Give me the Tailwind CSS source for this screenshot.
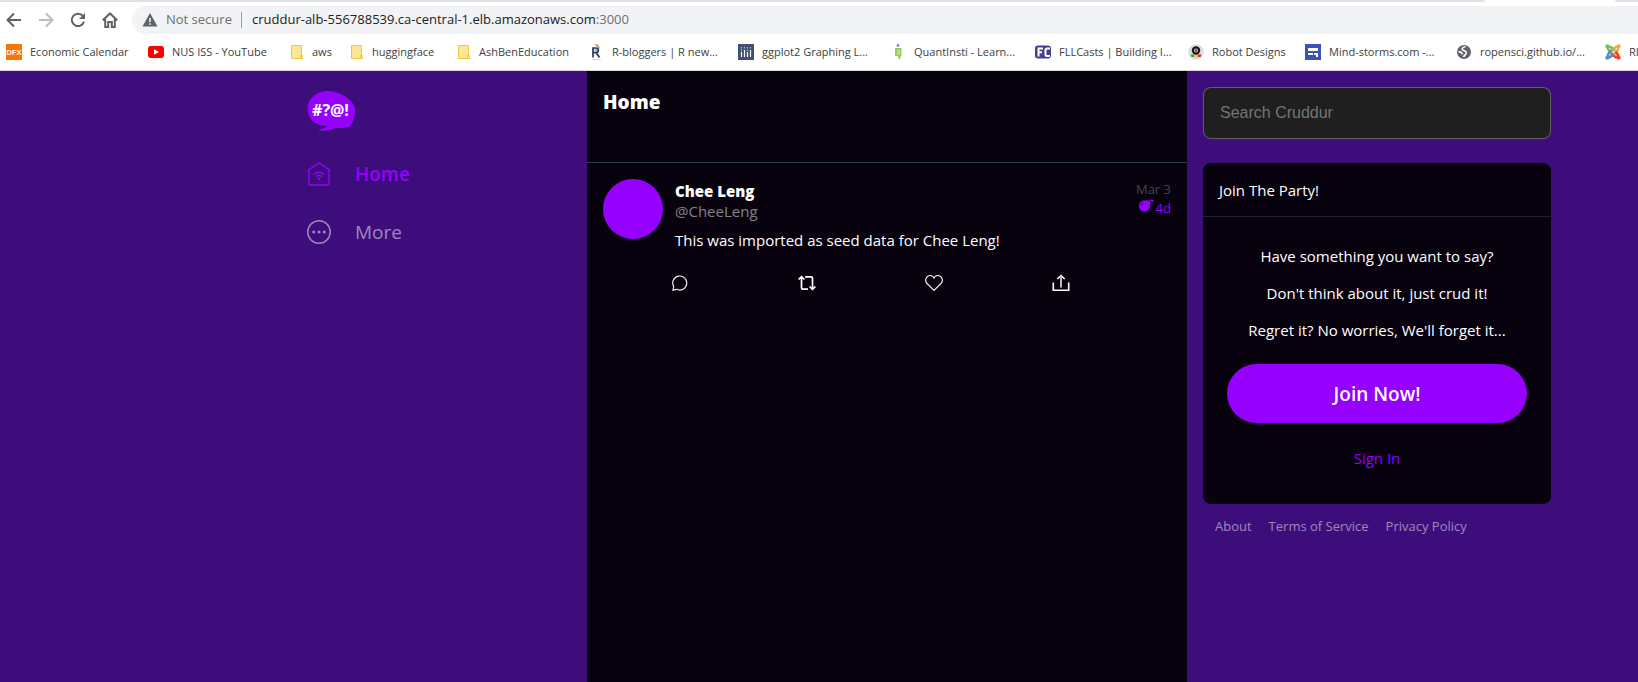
<!DOCTYPE html>
<html lang="en">
<head>
<meta charset="utf-8">
<title>Cruddur</title>
<script src="https://cdn.jsdelivr.net/npm/@tailwindcss/browser@4"></script>
</head>
<body class="flex min-h-screen flex-col overflow-x-hidden bg-[#3d0d7b] font-['Open_Sans','Noto_Sans',sans-serif] text-white">

<!-- Browser toolbar -->
<header class="overflow-hidden border-b border-[#d5dbdd] bg-white text-[#3c4043]">
  <div class="flex h-0.5"><div class="flex-1 rounded-br-lg bg-[#dee1e6]"></div><div class="w-[130px]"></div><div class="w-[23px] rounded-bl-lg bg-[#dee1e6]"></div></div>
  <div class="flex items-center pt-1 pl-1.5">
    <div class="flex shrink-0 gap-4 pr-3.5">
      <button aria-label="Back" class="size-4"><svg viewBox="0 0 16 16" class="size-4 fill-none stroke-[#5f6368] stroke-2"><path d="M15 8H2M8 1.500L1.500 8L8 14.500"/></svg></button>
      <button aria-label="Forward" class="size-4"><svg viewBox="0 0 16 16" class="size-4 fill-none stroke-[#babcbe] stroke-2"><path d="M1 8H14M8 1.500L14.500 8L8 14.500"/></svg></button>
      <button aria-label="Reload" class="size-4"><svg viewBox="0 0 16 16" class="size-4 fill-none stroke-[#5f6368] stroke-2"><path d="M13 4.200A6.200 6.200 0 1 0 14 9.500"/><path d="M15 1V7H9Z" fill="#5f6368" stroke="none"/></svg></button>
      <button aria-label="Home page" class="size-4"><svg viewBox="0 0 16 16" class="size-4 fill-none stroke-[#5f6368] stroke-2"><path d="M.8 8.300L8 1.500L15.200 8.300M3.200 7V15H6.200V10H9.800V15H12.800V7"/></svg></button>
    </div>
    <div class="flex h-7 flex-1 items-center rounded-l-full bg-[#f1f3f4] pl-2.5 text-[13px] whitespace-nowrap">
      <svg viewBox="0 0 16 16" class="size-4 shrink-0"><path d="M8 1L15.500 14.500H.5Z" fill="#5f6368"/><path d="M7.200 6H8.800V10H7.200ZM7.200 11.200H8.800V12.800H7.200Z" fill="#f1f3f4"/></svg>
      <span class="ml-2 w-[75px] text-[#6b6f73]">Not secure</span>
      <span class="h-4 w-px bg-[#9aa0a6]"></span>
      <span class="ml-2.5 text-[#202124]">cruddur-alb-556788539.ca-central-1.elb.amazonaws.com<span class="text-[#6b6f73]">:3000</span></span>
    </div>
  </div>
  <nav aria-label="Bookmarks" class="flex h-9 items-center pl-1.5 text-[11px] whitespace-nowrap">
    <a href="#" class="flex w-[142px] shrink-0 items-center gap-2"><svg viewBox="0 0 16 16" class="size-4"><rect width="16" height="16" fill="#ff7300"/><text x="8" y="11" text-anchor="middle" font-family="Liberation Sans" font-weight="700" font-size="7.500" fill="#fff">DFX</text></svg>Economic Calendar</a>
    <a href="#" class="flex w-[140px] shrink-0 items-center gap-2"><svg viewBox="0 0 16 16" class="size-4"><rect y="2" width="16" height="12" rx="3" fill="#f00"/><path d="M6 5.200V10.800L11 8Z" fill="#fff"/></svg>NUS ISS - YouTube</a>
    <a href="#" class="flex w-[60px] shrink-0 items-center gap-2"><svg viewBox="0 0 16 16" class="size-4"><path d="M3.500 1.500H13.500V11L14.500 12V14.500H3.500Z" fill="#ffe694" stroke="#edc64c"/><path d="M12.500 14V11.500H14.500" fill="none" stroke="#edc64c"/></svg>aws</a>
    <a href="#" class="flex w-[107px] shrink-0 items-center gap-2"><svg viewBox="0 0 16 16" class="size-4"><path d="M3.500 1.500H13.500V11L14.500 12V14.500H3.500Z" fill="#ffe694" stroke="#edc64c"/><path d="M12.500 14V11.500H14.500" fill="none" stroke="#edc64c"/></svg>huggingface</a>
    <a href="#" class="flex w-[133px] shrink-0 items-center gap-2"><svg viewBox="0 0 16 16" class="size-4"><path d="M3.500 1.500H13.500V11L14.500 12V14.500H3.500Z" fill="#ffe694" stroke="#edc64c"/><path d="M12.500 14V11.500H14.500" fill="none" stroke="#edc64c"/></svg>AshBenEducation</a>
    <a href="#" class="flex w-[150px] shrink-0 items-center gap-2"><svg viewBox="0 0 16 16" class="size-4"><path d="M6 0L10 .5L12.500 5L9 3Z" fill="#d9936f"/><path d="M5 13.500V4H8A2.300 2.300 0 0 1 8 8.600H5M8 8.600L11.500 13.500" fill="none" stroke="#1f3a63" stroke-width="1.700"/><path d="M6.500 6H9" stroke="#e3a080" stroke-width="2"/><path d="M4 15.500H13" stroke="#f3cdbd"/></svg>R-bloggers | R new...</a>
    <a href="#" class="flex w-[152px] shrink-0 items-center gap-2"><svg viewBox="0 0 16 16" class="size-4"><rect width="16" height="16" fill="#3f4f75"/><path d="M3.500 8V13M6.500 6V13M9.500 8V13M12.500 6V13" stroke="#fff" stroke-width="1.200"/><path d="M3.500 3V4.500M3.500 5.500V7M6.500 3V4.500M9.500 3V4.500M9.500 5.500V7M12.500 3V4.500" stroke="#80cfbe" stroke-width="1.200"/></svg>ggplot2 Graphing L...</a>
    <a href="#" class="flex w-[145px] shrink-0 items-center gap-2"><svg viewBox="0 0 16 16" class="size-4"><circle cx="8" cy="1.500" r="1.400" fill="#7590c4"/><path d="M5 4H11.500V12H10.500V15.500L8 14V12H5Z" fill="#97cd52"/><path d="M7 6.500H9.500V8.500H7.500V10H10" fill="none" stroke="#e4f3d2" stroke-width=".8"/></svg>QuantInsti - Learn...</a>
    <a href="#" class="flex w-[153px] shrink-0 items-center gap-2"><svg viewBox="0 0 16 16" class="size-4"><rect y="1.500" width="16" height="13" rx="3" fill="#45408e"/><path d="M3.500 12.500V4.500H8M3.500 8.300H7M15 4.500H12A1.500 1.500 0 0 0 10.500 6V10.500A1.500 1.500 0 0 0 12 12H15" fill="none" stroke="#fff" stroke-width="2"/></svg>FLLCasts | Building I...</a>
    <a href="#" class="flex w-[117px] shrink-0 items-center gap-2"><svg viewBox="0 0 16 16" class="size-4"><circle cx="8" cy="8" r="7.800" fill="#d9dfe8"/><circle cx="8" cy="6.500" r="4.200" fill="#161616"/><circle cx="8" cy="6.500" r="2" fill="#ddd"/><circle cx="8" cy="6.500" r="1.200" fill="#a22"/><path d="M2.500 10.500H6V13H3.500Z" fill="#28a34a"/><path d="M6 11H10V13.500H6Z" fill="#f5d21f"/><path d="M10 10.500H13.500L12.500 13H10Z" fill="#e22"/></svg>Robot Designs</a>
    <a href="#" class="flex w-[151px] shrink-0 items-center gap-2"><svg viewBox="0 0 16 16" class="size-4"><rect width="16" height="16" fill="#3f51b5"/><path d="M3 4H13V7H3ZM3 9H8V11H3ZM9 9H13V13H11V11H9Z" fill="#fff"/></svg>Mind-storms.com -...</a>
    <a href="#" class="flex w-[149px] shrink-0 items-center gap-2"><svg viewBox="0 0 16 16" class="size-4"><circle cx="8" cy="8" r="7" fill="#5f6368"/><path d="M9.500 2.800C7 3.200 5.500 4.300 6.500 5.700C7.500 7 10 6.500 10.300 8.500C10.500 10.500 8.500 11 7.500 13M2.500 8C4.500 7.500 6.500 8.500 6 10.500" fill="none" stroke="#fff" stroke-width="1.600"/></svg>ropensci.github.io/...</a>
    <a href="#" class="flex shrink-0 items-center gap-2"><svg viewBox="0 0 16 16" class="size-4 fill-none stroke-[2.500]"><circle cx="2.300" cy="2.300" r="2" fill="#7ac143" stroke="none"/><circle cx="13.700" cy="2.300" r="2" fill="#f9a541" stroke="none"/><circle cx="2.300" cy="13.700" r="2" fill="#5091cd" stroke="none"/><circle cx="13.700" cy="13.700" r="2" fill="#f44321" stroke="none"/><path d="M2.500 2.500Q2.500 5 4 6.500L5.500 8M2.500 2.500Q5.500 2.500 7 4L10 7" stroke="#7ac143"/><path d="M13.500 2.500Q11 2.500 9.500 4L8 5.500M13.500 2.500Q13.500 5.500 12 7L9 10" stroke="#f9a541"/><path d="M13.500 13.500Q13.500 11 12 9.500L10.500 8M13.500 13.500Q10.500 13.500 9 12L6 9" stroke="#f44321"/><path d="M2.500 13.500Q5 13.500 6.500 12L8 10.500M2.500 13.500Q2.500 10.500 4 9L7 6" stroke="#5091cd"/></svg>RI</a>
  </nav>
</header>

<div class="mx-auto flex w-full max-w-[1496px] flex-1">
  <!-- Main navigation -->
  <nav aria-label="Main" class="flex flex-1 justify-end">
    <div class="flex w-[280px] flex-col text-[19px]">
      <svg viewBox="0 0 48 40" class="mt-5 h-10 w-12" role="img" aria-label="Cruddur"><path d="M19 0C32-.5 48 9 48 19C48 25 46 33 42 36C36 37 31 37 28 37C24 39 18 41 11 39C15 38 18 37 20 35C8 35 .5 28 .5 18C.5 8 9 1 19 0Z" fill="#9500ff"/><text x="23.500" y="25" text-anchor="middle" font-family="Open Sans" font-weight="700" font-size="16" fill="#fff">#?@!</text></svg>
      <a href="#" class="mt-7 flex h-[30px] items-center gap-6 font-semibold text-[#9500ff]"><svg viewBox="0 0 24 24" class="size-6 fill-none stroke-current" stroke-width="1.400"><path d="M.7 8.500L12 .8L23.300 8.500M2 7.800V22Q2 23 3 23H21Q22 23 22 22V7.800"/><path d="M7 12.500Q12 8 17 12.500M9 14.700Q12 12 15 14.700"/><circle cx="12" cy="16.800" r="1.200" fill="currentColor" stroke="none"/></svg>Home</a>
      <a href="#" class="mt-7 flex h-[30px] items-center gap-6 text-white/50"><svg viewBox="0 0 24 24" class="size-6 fill-none stroke-current" stroke-width="1.500"><circle cx="12" cy="12" r="11.200"/><g fill="currentColor" stroke="none"><circle cx="6.700" cy="12" r="1.600"/><circle cx="12" cy="12" r="1.600"/><circle cx="17.300" cy="12" r="1.600"/></g></svg>More</a>
    </div>
  </nav>

  <!-- Activity feed -->
  <main class="w-[600px] bg-[#08010e]">
    <div class="h-23 border-b border-[#313d45] px-4 pt-4"><h1 class="text-[19px] leading-[30px] font-extrabold">Home</h1></div>
    <article class="px-4 pt-4 text-[15px]">
      <div class="flex gap-3">
        <div class="size-15 shrink-0 rounded-full bg-[#9500ff]"></div>
        <div class="flex-1">
          <div class="flex justify-between">
            <div class="pt-0.5 leading-5"><a href="#" class="block font-extrabold">Chee Leng</a><a href="#" class="block text-white/50">@CheeLeng</a></div>
            <div class="pt-px text-right text-[13px] leading-[19px]"><time class="block text-[#414652]">Mar 3</time>
              <div class="flex justify-end gap-0.5 text-[#9500ff]"><svg viewBox="0 0 16 14" class="h-3.5 w-4 fill-current"><circle cx="6.500" cy="7" r="5.700"/><path d="M8 2L9.500 .8L12.800 3.500L11.500 5.500Z"/><path d="M11 2.500Q12 .7 13 1.500H15.500M13.700 .3L14.500 3" fill="none" stroke="currentColor"/><path d="M2.700 6.500Q3.200 4.400 5 3.600" fill="none" stroke="#08010e" stroke-width=".7"/></svg>4d</div>
            </div>
          </div>
          <p class="mt-[9px] leading-5">This was imported as seed data for Chee Leng!</p>
        </div>
      </div>
      <div class="mt-[21px] ml-[65px] flex">
        <button aria-label="Reply" class="flex h-6 w-[127px] items-center pl-1"><svg viewBox="0 0 16 16" class="size-4 fill-none stroke-[#eee]" stroke-width="1.200"><path d="M1 15.200L1.700 11.500A7 7 0 1 1 4.700 14.300Z"/></svg></button>
        <button aria-label="Repost" class="flex h-6 w-[127px] items-center pl-[3px]"><svg viewBox="0 0 18 16" class="h-4 w-[18px] fill-none stroke-white" stroke-width="1.700"><path d="M.6 4.500L3.500 1.600L6.400 4.500M3.500 2V12.500Q3.500 14.200 5.200 14.200H10M11.600 11.500L14.500 14.400L17.400 11.500M14.500 14V3.500Q14.500 1.800 12.800 1.800H7"/></svg></button>
        <button aria-label="Like" class="flex h-6 w-[127px] items-center pl-[3px]"><svg viewBox="0 0 18 16" class="h-4 w-[18px] fill-none stroke-[#eee]" stroke-width="1.200"><path d="M9 15.400L1.800 8.300C-.3 6 .6 2.300 3.200 1C5.600-.1 8 .8 9 3C10 .8 12.400-.1 14.800 1C17.400 2.300 18.300 6 16.200 8.300Z"/></svg></button>
        <button aria-label="Share" class="flex h-6 items-center pl-[3px]"><svg viewBox="0 0 18 18" class="size-[18px] fill-none stroke-white" stroke-width="1.600"><path d="M1.300 8.500V16.200H16.700V8.500"/><path d="M5.300 5L9 1.500L12.700 5"/><path d="M9 2V13.500" stroke="#bbb" stroke-width="2"/></svg></button>
      </div>
    </article>
  </main>

  <!-- Search and sign-up -->
  <section class="w-[380px] p-4 text-[15px]">
    <input type="text" aria-label="Search Cruddur" placeholder="Search Cruddur" class="block h-[52px] w-full rounded-lg border border-white/29 bg-[#1f1f1f] px-4 font-['Liberation_Sans',Arial,sans-serif] text-base placeholder:text-[#757575]">
    <div class="mt-6 rounded-lg bg-[#08010e]">
      <h2 class="border-b border-[#1c232e] px-4 pt-[17px] pb-[15px] leading-[21px]">Join The Party!</h2>
      <div class="px-6 pt-[29px] pb-[35px] text-center leading-[21px]">
        <div class="flex flex-col gap-4"><p>Have something you want to say?</p><p>Don't think about it, just crud it!</p><p>Regret it? No worries, We'll forget it...</p></div>
        <button class="mt-[23px] h-[59px] w-full rounded-full bg-[#9500ff] pt-0.5 text-[19px] font-semibold">Join Now!</button>
        <a href="#" class="mt-[25px] block text-[#9500ff]">Sign In</a>
      </div>
    </div>
    <footer class="mt-[13px] flex gap-[17px] px-3 text-[13px] text-white/50"><a href="#">About</a><a href="#">Terms of Service</a><a href="#">Privacy Policy</a></footer>
  </section>
</div>
</body>
</html>
